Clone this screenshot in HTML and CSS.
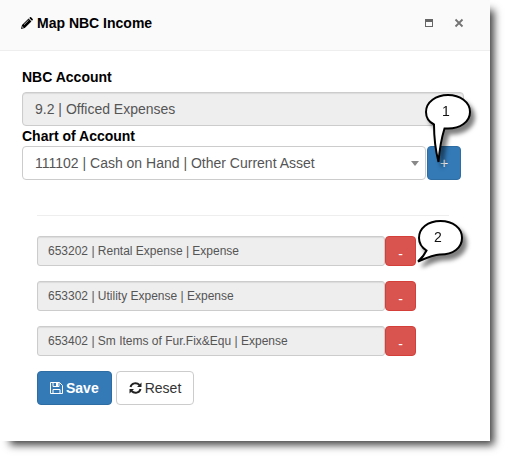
FILE: index.html
```html
<!DOCTYPE html>
<html lang="en">
<head>
<meta charset="utf-8">
<title>Map NBC Income</title>
<link rel="stylesheet" href="styles.css">
</head>
<body>
<main class="dialog">
  <header class="dialog-header">
    <svg class="icon-pencil" viewBox="0 0 12 12" aria-hidden="true"><path fill="#000" d="M1 8 7.6 1.6 10.4 4.4 3.8 11 0 12zM8.3 1 9 .3Q9.5-.2 10.1.3L11.7 1.9Q12.2 2.5 11.7 3L11 3.7z"/><path stroke="#fafafa" stroke-width=".7" d="M3 7.7 7.6 3.2"/><path fill="#fafafa" d="M1.5 9.2 2.7 10.4 1.5 10.7 1.2 10.4z"/></svg>
    <h1 class="title">Map NBC Income</h1>
    <button class="tool" type="button" aria-label="Maximize"><svg viewBox="0 0 8 8"><path fill="#666" fill-rule="evenodd" d="M0 0H8V8H0zM1 3H7V7H1z"/></svg></button>
    <button class="tool" type="button" aria-label="Close"><svg viewBox="0 0 8 8"><path stroke="#747474" stroke-width="1.800" d="M.5.500 7.500 7.500M7.500.500.500 7.500"/></svg></button>
  </header>
  <form class="dialog-body">
    <label class="label" for="nbc">NBC Account</label>
    <input class="field" id="nbc" value="9.2 | Officed Expenses" readonly>
    <label class="label" for="chart">Chart of Account</label>
    <div class="picker">
      <div class="select-wrap">
        <select class="field select" id="chart"><option>111102 | Cash on Hand | Other Current Asset</option></select>
      </div>
      <div class="anchor">
        <button class="btn primary add" type="button">+</button>
        <div class="callout callout-one">
          <svg viewBox="0 0 46 70" aria-hidden="true"><path class="bubble" d="M9 30.500C4 28 1 23 1 18C1 8 11 1 23 1C35 1 45 8 45 18C45 28 35 34.500 23 34.500L19.500 34.500Q15 49 13.500 68Q9 50 9 30.500Z"/></svg>
          <span class="number">1</span>
        </div>
      </div>
    </div>
    <section class="accounts">
      <div class="row">
        <input class="field small" aria-label="Account 1" value="653202 | Rental Expense | Expense" readonly>
        <div class="anchor">
          <button class="btn danger" type="button">-</button>
          <div class="callout callout-two">
            <svg viewBox="0 0 46 44" aria-hidden="true"><path class="bubble" d="M9.500 30.500C4 27 2 23 2 18C2 8 11 1 23.500 1C36 1 45 8 45 18C45 28 36 34.500 23.500 34.500Q18 34 1 41.500Q7 36 9.500 30.500Z"/></svg>
            <span class="number">2</span>
          </div>
        </div>
      </div>
      <div class="row">
        <input class="field small" aria-label="Account 2" value="653302 | Utility Expense | Expense" readonly>
        <button class="btn danger" type="button">-</button>
      </div>
      <div class="row">
        <input class="field small" aria-label="Account 3" value="653402 | Sm Items of Fur.Fix&amp;Equ | Expense" readonly>
        <button class="btn danger" type="button">-</button>
      </div>
      <div class="actions">
        <button class="btn primary save" type="submit"><svg class="icon" viewBox="0 0 13 12" aria-hidden="true"><path fill="none" stroke="#fff" d="M.5.5H9.500L12.500 3.500V11.500H.5zM3 .5V4.500H9V.5M3 11.500V7.500H10V11.500"/><path fill="#fff" d="M6 1H8V4H6z"/></svg>Save</button>
        <button class="btn plain" type="reset"><svg class="icon" viewBox="0 0 13 12" aria-hidden="true"><path fill="none" stroke="#222" stroke-width="2" d="M1.500 5C2.500 1 7.500 0 10.500 3M11.500 7C10.500 11 5.500 12 2.500 9"/><path fill="#222" d="M12.500.5V5H8zM.5 11.500V7H5z"/></svg>Reset</button>
      </div>
    </section>
  </form>
</main>
</body>
</html>
```
FILE: styles.css
```css
* { box-sizing: border-box; }
body {
  margin: 0;
  background: #fff;
  color: #555;
  font: 14px/20px "Liberation Sans", Arial, sans-serif;
}
button, input, select { font: inherit; }
svg { display: block; overflow: visible; }

.dialog {
  margin: 0 15px 15px 0;
  background: #fff;
  box-shadow: 7px 7px 8px -3px rgba(0, 0, 0, .75);
}
.dialog-header {
  display: flex;
  align-items: center;
  height: 51px;
  padding: 0 27px 4px 21px;
  background: #fafafa;
  border-bottom: 1px solid #eee;
}
.icon-pencil { width: 12px; height: 12px; margin-right: 4px; }
.title { flex: 1; margin: 0; color: #000; font-size: 14px; line-height: 20px; }
.tool {
  padding: 0;
  border: 0;
  background: none;
  margin-left: 22px;
}
.tool svg { width: 8px; height: 8px; }

.dialog-body { padding: 16px 26px 36px 22px; }
.label { display: block; width: max-content; color: #000; font-weight: bold; }
.label:first-child { margin-bottom: 5px; }
.field {
  display: block;
  width: 100%;
  min-width: 0;
  height: 34px;
  padding: 0 12px;
  border: 1px solid #ccc;
  border-radius: 4px;
  background: #eee;
  box-shadow: inset 0 1px 1px rgba(0, 0, 0, .08);
  color: #555;
}
.picker { display: flex; gap: 1px; margin-right: 3px; }
.select-wrap { position: relative; flex: 1; }
.select-wrap::after {
  content: "";
  position: absolute;
  top: 15px;
  right: 7px;
  border: solid transparent;
  border-width: 5px 4px 0;
  border-top-color: #888;
  pointer-events: none;
}
.select { appearance: none; background: #fff; box-shadow: none; }
.anchor { position: relative; }

.btn {
  display: flex;
  align-items: center;
  justify-content: center;
  height: 34px;
  padding: 0 12px;
  border: 1px solid #ccc;
  border-radius: 4px;
  background: #fff;
  color: #333;
}
.primary { background: #337ab7; border-color: #2e6da4; color: #fff; }
.danger {
  height: 30px;
  width: 31px;
  padding: 6px 0 0;
  background: #d9534f;
  border-color: #d43f3a;
  color: #fff;
}
.add { width: 34px; padding: 0; }
.save { font-weight: bold; }
.icon { width: 13px; height: 12px; margin-right: 3px; }

.accounts {
  margin: 35px 15px 0;
  padding-top: 20px;
  border-top: 1px solid #eee;
}
.row { display: flex; margin: 0 33px 15px 0; }
.small { flex: 1; height: 30px; padding: 0 10px; font-size: 12px; border-radius: 3px; }
.actions { display: flex; gap: 4px; }

.callout { position: absolute; z-index: 1; pointer-events: none; filter: drop-shadow(4px 5px 2px rgba(0, 0, 0, .5)); }
.callout-one { top: -52px; left: -2px; width: 46px; }
.callout-two { top: -16px; left: 32px; width: 46px; }
.bubble { fill: #fff; stroke: #000; stroke-width: 2; }
.number { position: absolute; top: 7px; left: 0; width: 42px; color: #111; text-align: center; }
```
